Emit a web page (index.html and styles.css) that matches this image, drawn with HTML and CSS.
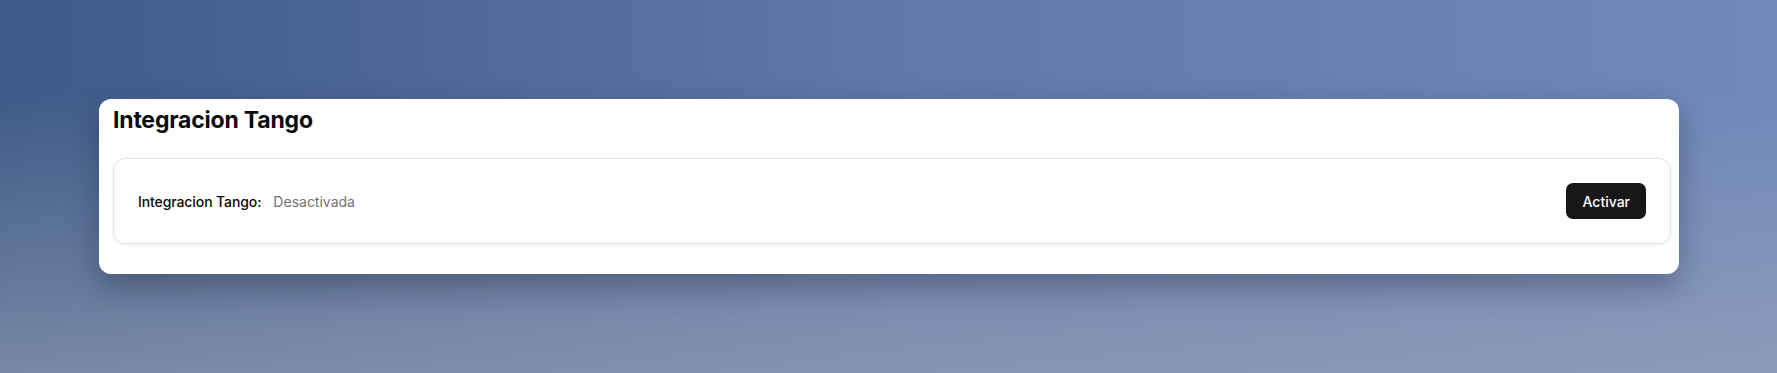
FILE: index.html
```html
<!DOCTYPE html>
<html lang="es">
<head>
    <meta charset="UTF-8">
    <meta name="viewport" content="width=device-width, initial-scale=1.0">
    <title>Integracion Tango</title>
    <link rel="stylesheet" href="styles.css">
</head>
<body>
    <div class="panel">
      <h2 class="panel-title">Integracion Tango</h2>
      <div class="status-box">
        <div class="status-info">
          <span class="status-label">Integracion Tango:</span>
          <span class="status-value">Desactivada</span>
        </div>
        <button type="button" class="btn-activate">Activar</button>
      </div>
    </div>
</body>
</html>
```

FILE: styles.css
```css
* {
  margin: 0;
  padding: 0;
  box-sizing: border-box;
}
body {
  min-height: 373px;
  padding: 99px 98px 0 99px;
  font-family: Inter, "Noto Sans", sans-serif;
  background:
    linear-gradient(to bottom, rgba(158, 166, 184, 0) 25%, rgba(158, 166, 184, 0.6) 100%),
    linear-gradient(to right, #3d5a88 0%, #6078aa 50%, #7089bb 100%);
}
.panel {
  background: #fff;
  border-radius: 12px;
  padding: 5px 8px 30px 14px;
  box-shadow: 0 12px 30px rgba(20, 30, 50, 0.35);
}
.panel-title {
  font-size: 23px;
  line-height: 32px;
  font-weight: 700;
  color: #0a0a0a;
  margin-bottom: 22px;
  letter-spacing: -0.2px;
}
.status-box {
  display: flex;
  align-items: center;
  justify-content: space-between;
  padding: 24px;
  border: 1px solid #e5e5e5;
  border-radius: 12px;
  box-shadow: 0 1px 3px rgba(0, 0, 0, 0.08);
}
.status-info {
  display: flex;
  align-items: center;
  gap: 12px;
  font-size: 14px;
}
.status-label {
  font-weight: 500;
  color: #0a0a0a;
  letter-spacing: -0.1px;
}
.status-value {
  color: #737373;
}
.btn-activate {
  height: 36px;
  padding: 0 16px;
  border: none;
  border-radius: 7px;
  background: #171717;
  color: #fff;
  font-family: inherit;
  font-size: 14px;
  font-weight: 500;
  cursor: pointer;
}
```
